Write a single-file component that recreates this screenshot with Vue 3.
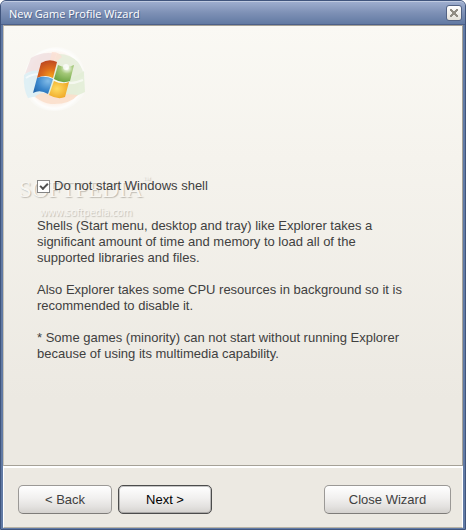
<template>
    <div class="window">
        <header class="titlebar">
            <h1>New Game Profile Wizard</h1>
            <button class="close" aria-label="Close" @click="closeWizard">
                <svg width="10" height="10" viewBox="0 0 10 10">
                    <path d="M1 1h2v1h1v1h2v-1h1v-1h2v2h-1v1h-1v2h1v1h1v2h-2v-1h-1v-1h-2v1h-1v1h-2v-2h1v-1h1v-2h-1v-1h-1z" fill="#918d84" />
                </svg>
            </button>
        </header>

        <main class="page">
            <div class="watermark">
                <div class="brand">SOFTPEDIA<sup>™</sup></div>
                <div class="site">www.softpedia.com</div>
            </div>

            <svg class="logo" width="64" height="66" viewBox="0 0 64 66">
                <defs>
                    <radialGradient id="halo">
                        <stop offset="0.8" stop-color="#fdf3ec" stop-opacity="0.9" />
                        <stop offset="0.92" stop-color="#fff" stop-opacity="0.8" />
                        <stop offset="1" stop-color="#fff" stop-opacity="0.3" />
                    </radialGradient>
                    <radialGradient id="red" cx="0.7" cy="0.9" r="0.9">
                        <stop offset="0" stop-color="#f4a01c" />
                        <stop offset="0.5" stop-color="#dc6a1c" />
                        <stop offset="1" stop-color="#bd4820" />
                    </radialGradient>
                    <radialGradient id="green" cx="0.65" cy="0.2" r="0.9">
                        <stop offset="0" stop-color="#fff" />
                        <stop offset="0.35" stop-color="#a4c878" />
                        <stop offset="1" stop-color="#659f3a" />
                    </radialGradient>
                    <radialGradient id="blue" cx="0.75" cy="0.25" r="0.9">
                        <stop offset="0" stop-color="#82bce8" />
                        <stop offset="0.6" stop-color="#3985ca" />
                        <stop offset="1" stop-color="#2468ad" />
                    </radialGradient>
                    <radialGradient id="yellow" cx="0.4" cy="0.45" r="0.7">
                        <stop offset="0" stop-color="#ffdc61" />
                        <stop offset="1" stop-color="#eda11f" />
                    </radialGradient>
                </defs>
                <path d="M33 0 C49 0 61 12 62 28 L62 45 C56 57 45 64 31 64 C14 64 1 52 1 35 C0 15 14 1 33 0Z" fill="url(#halo)" />
                <path d="M8 11 Q20 4 33 7 L27 30 Q14 20 2 27Z" fill="#efdfe0" opacity="0.8" />
                <path d="M34 7 Q46 6 55 15 Q60 22 61 29 Q46 38 27 29Z" fill="#e6edda" opacity="0.9" />
                <path d="M1 28 Q13 18 30 30 L26 51 Q15 48 5 51 Q0 42 1 28Z" fill="#dceef4" opacity="0.9" />
                <path d="M28 30 Q45 36 61 24 L62 45 Q43 55 24 48Z" fill="#e2edd6" opacity="0.9" />
                <path d="M12 50 Q15 46 22 46 Q36 46 55 48 Q46 58 28 57 Q20 56 12 50Z" fill="#fbdfcb" opacity="0.9" />
                <path d="M29 5 Q36 5 39 10 Q31 15 27 28 L24 24Z" fill="#fbe0d3" opacity="0.8" />
                <path d="M3 31 Q14 23 29 32 Q44 40 60 33" fill="none" stroke="#fff" stroke-width="2" opacity="0.6" />
                <path d="M18 16 Q26 11 34 15 L30 31 Q22 27 14 31Z" fill="url(#red)" />
                <path d="M35 18 Q43 22 51 18 L47 34 Q39 37 31 32Z" fill="url(#green)" />
                <path d="M14 31 Q22 28 30 32 L25 47 Q17 42 10 46Z" fill="url(#blue)" />
                <path d="M31 34 Q39 38 46 35 L42 50 Q35 53 26 48Z" fill="url(#yellow)" />
                <circle cx="43" cy="20" r="3" fill="#fff" opacity="0.7" />
            </svg>

            <section class="content">
                <label class="option">
                    <input type="checkbox" v-model="skipShell" />
                    <span>Do not start Windows shell</span>
                </label>
                <p>
                    Shells (Start menu, desktop and tray) like Explorer takes a
                    significant amount of time and memory to load all of the
                    supported libraries and files.
                </p>
                <p>
                    Also Explorer takes some CPU resources in background so it is
                    recommended to disable it.
                </p>
                <p>
                    * Some games (minority) can not start without running Explorer
                    because of using its multimedia capability.
                </p>
            </section>
        </main>

        <footer class="footer">
            <button class="btn">&lt; Back</button>
            <button class="btn primary">Next &gt;</button>
            <button class="btn wide" @click="closeWizard">Close Wizard</button>
        </footer>
    </div>
</template>

<script setup>
import { ref } from 'vue';

const skipShell = ref(true);

const closeWizard = () => {
    window.close();
};
</script>

<style>
    body{
        margin:0;
        background:#fff;
    }
</style>

<style scoped>

    .window{
        box-sizing:border-box;
        min-height:100vh;
        margin-right:1px;
        display:flex;
        flex-direction:column;
        padding:0 2px 1px;
        border:1px solid #40557d;
        border-radius:6px 6px 0 0;
        background:#617aa4;
        font-family:"Liberation Sans", Arial, sans-serif;
        font-size:13px;
        line-height:16px;
        color:#404040;
    }

    .titlebar{
        height:24px;
        box-sizing:border-box;
        margin:0 -2px;
        padding:0 3px 0 8px;
        display:flex;
        align-items:center;
        justify-content:space-between;
        border-top:1px solid #c0cbe1;
        border-bottom:1px solid #4d6088;
        border-radius:5px 5px 0 0;
        background:linear-gradient(#9dadce, #7d90b5 50%, #627aa3);
    }

    .titlebar h1{
        margin:0;
        padding-top:2px;
        font:11px/16px "Open Sans", "Noto Sans", sans-serif;
        color:#fff;
        text-shadow:1px 1px 0 #52678e;
    }

    .close{
        width:16px;
        height:16px;
        padding:0;
        display:flex;
        align-items:center;
        justify-content:center;
        border:1px solid #536384;
        border-radius:3px;
        background:linear-gradient(#fff, #e4e1d9);
    }

    .page{
        flex:1;
        position:relative;
        padding:21px 32px 24px 19px;
        border:1px solid #a5a197;
        border-left-color:#c5c1b5;
        background:linear-gradient(#faf9f4, #f5f3ed 30%, #ece9e2 85%);
    }

    .logo{
        display:block;
    }

    .content{
        position:relative;
        max-width:376px;
        padding:65px 0 0 14px;
    }

    .content p{
        margin:0 0 16px;
    }

    .option{
        display:flex;
        align-items:center;
        gap:4px;
        margin-bottom:24px;
    }

    .option input{
        appearance:none;
        width:13px;
        height:13px;
        margin:0;
        border:1px solid #858585;
        background:#fff;
        display:grid;
        place-items:center;
    }

    .option input:checked::before{
        content:"";
        width:6px;
        height:3px;
        border:solid #505050;
        border-width:0 0 2px 2px;
        transform:translateY(-1px) rotate(-45deg);
    }

    .watermark{
        position:absolute;
        left:15px;
        top:150px;
        color:#f8f6f2;
        text-shadow:1px 1px 1px rgba(110, 105, 95, 0.4);
        pointer-events:none;
    }

    .brand{
        font:23px/28px "Liberation Serif", "Times New Roman", serif;
    }

    .brand sup{
        font-size:8px;
        line-height:8px;
        vertical-align:top;
    }

    .site{
        padding-left:21px;
        font:10px/16px "Open Sans", sans-serif;
    }

    .footer{
        display:flex;
        gap:6px;
        padding:17px 11px 13px 14px;
        border-top:2px solid #fff;
        border-left:1px solid #fff;
        border-right:1px solid #fff;
        border-bottom:1px solid #b8b3a5;
        background:#ece9e2;
    }

    .btn{
        width:94px;
        height:29px;
        padding:0;
        border:1px solid #9b9996;
        border-bottom-color:#7e7c79;
        border-radius:5px;
        background:linear-gradient(#fff, #f1f0ef 45%, #e4e2e0 75%, #d4d1ce);
        font:inherit;
        color:#404040;
    }

    .primary{
        border-color:#4c4c4c;
        box-shadow:inset 0 0 0 1px rgba(90, 90, 90, 0.35);
        color:#000;
    }

    .wide{
        width:127px;
        margin-left:auto;
    }

</style>
